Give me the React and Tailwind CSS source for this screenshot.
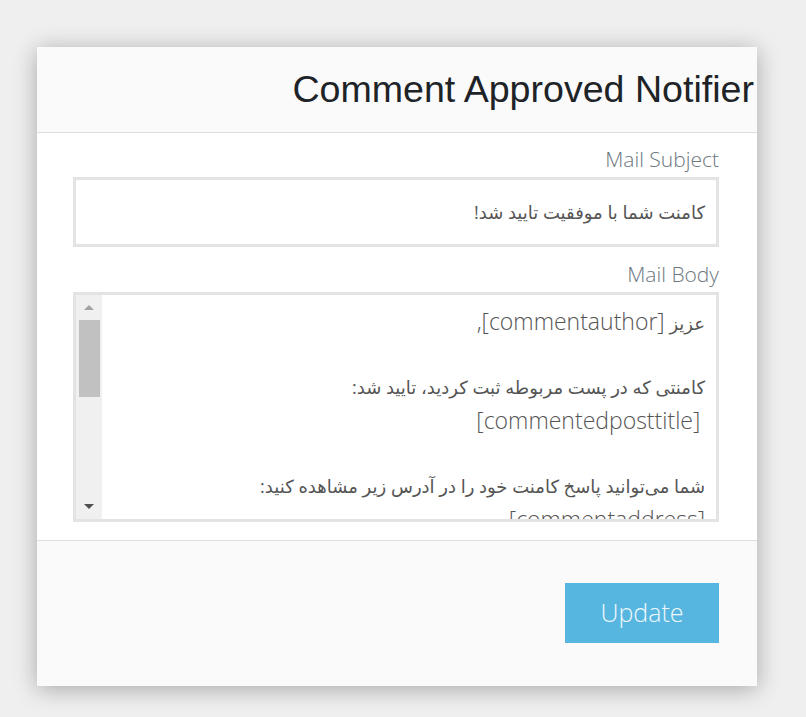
import React from "react";

const bodyFont = { fontFamily: '"Open Sans", "DejaVu Sans", sans-serif' };

const Label = ({ children, className = "" }) => (
  <div
    className={`text-right text-[21px] font-light leading-[30px] text-[#6d7780] ${className}`}
  >
    {children}
  </div>
);

const Scrollbar = () => (
  <div className="flex w-[26px] shrink-0 flex-col items-center bg-[#f0f0f0]">
    <div className="flex h-[25px] items-center justify-center">
      <div className="h-0 w-0 border-x-[5px] border-b-[5px] border-x-transparent border-b-[#a3a3a3]" />
    </div>
    <div className="h-[77px] w-[21px] bg-[#c1c1c1]" />
    <div className="flex-1" />
    <div className="flex h-[25px] items-center justify-center">
      <div className="h-0 w-0 border-x-[5px] border-t-[5px] border-x-transparent border-t-[#505050]" />
    </div>
  </div>
);

const Line = ({ children }) => (
  <div className="h-[33px] whitespace-pre leading-[33px]">{children}</div>
);

const Latin = ({ children }) => (
  <span className="text-[23px] font-light">{children}</span>
);

export default function App() {
  return (
    <div className="min-h-[717px] bg-[#efefef] pl-[37px] pt-[47px]" style={bodyFont}>
      <div className="flex h-[639px] w-[720px] flex-col overflow-hidden bg-white shadow-[0_3px_22px_rgba(0,0,0,0.3)]">
        <div className="flex h-[86px] shrink-0 items-center justify-end overflow-hidden border-b border-[#d8dfdf] bg-[#fafafa] pr-[3px]">
          <h1
            className="whitespace-nowrap text-[37.6px] leading-none text-[#1d2327]"
            style={{ fontFamily: '"Liberation Sans", Arial, sans-serif' }}
          >
            Comment Approved Notifier
          </h1>
        </div>

        <div className="shrink-0 border-b border-[#dddddd] pb-[18px] pl-[36px] pr-[38px] pt-[11px]">
          <Label className="mb-[3px]">Mail Subject</Label>
          <div
            dir="rtl"
            className="flex h-[70px] items-center border-[3px] border-[#e3e3e3] pr-[11px] text-[18px] text-[#555555]"
          >
            کامنت شما با موفقیت تایید شد!
          </div>

          <Label className="mb-[3px] mt-[12px]">Mail Body</Label>
          <div className="flex h-[230px] border-[3px] border-[#e3e3e3]">
            <Scrollbar />
            <div
              dir="rtl"
              className="flex-1 overflow-hidden pr-[11px] pt-[10px] text-[18px] text-[#555555]"
            >
              <Line>
                عزیز <Latin>[commentauthor],</Latin>
              </Line>
              <Line> </Line>
              <Line>کامنتی که در پست مربوطه ثبت کردید، تایید شد:</Line>
              <Line>
                {" "}
                <Latin>[commentedposttitle]</Latin>
              </Line>
              <Line> </Line>
              <Line>شما می‌توانید پاسخ کامنت خود را در آدرس زیر مشاهده کنید:</Line>
              <Line>
                <Latin>[commentaddress]</Latin>
              </Line>
            </div>
          </div>
        </div>

        <div className="flex flex-1 items-start justify-end bg-[#fafafa] pr-[38px] pt-[42px]">
          <button className="h-[60px] w-[154px] bg-[#57b6e0] text-[25px] font-light text-[#eef8fc]">
            Update
          </button>
        </div>
      </div>
    </div>
  );
}
